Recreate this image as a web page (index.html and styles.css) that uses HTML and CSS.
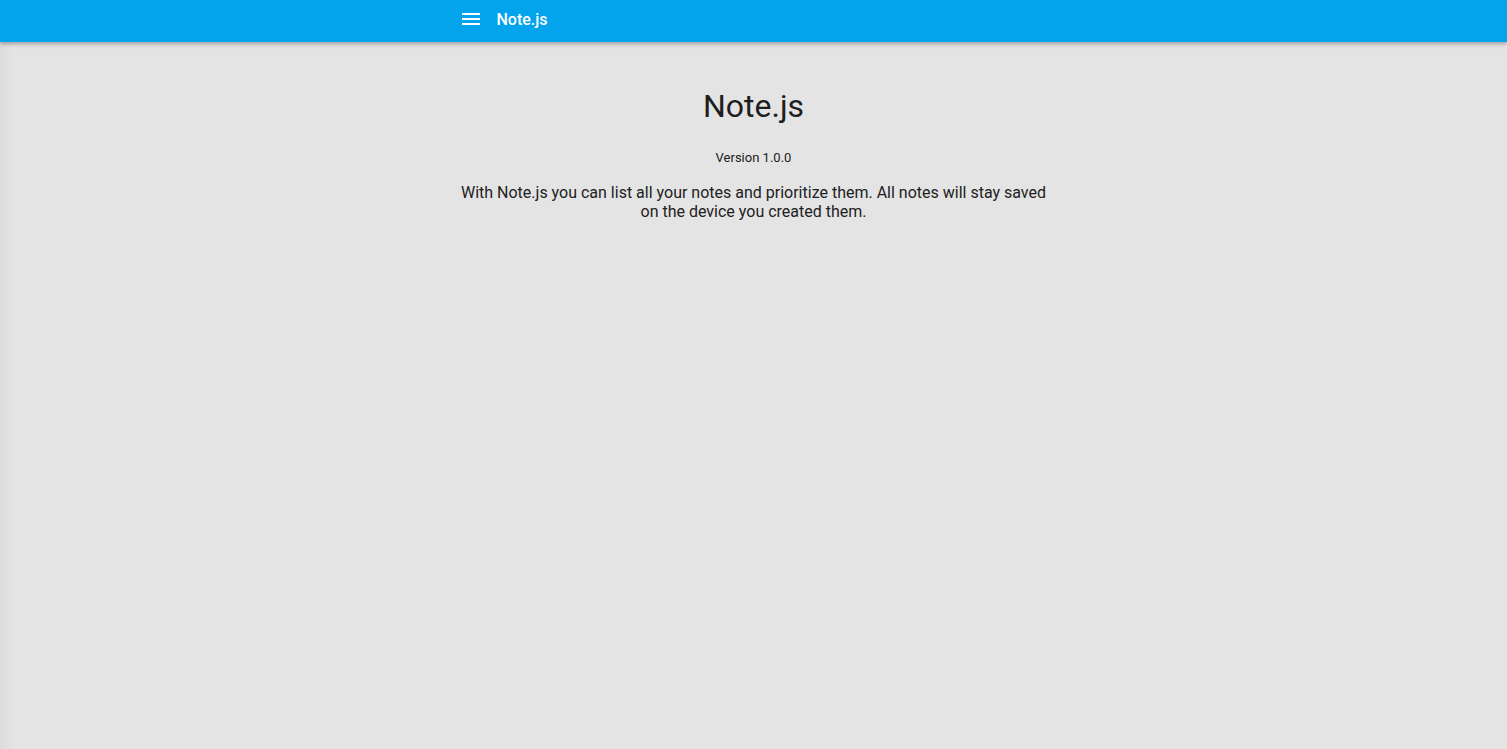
FILE: index.html
```html
<!DOCTYPE html>
<html>
<head>
<meta charset="utf-8">
<link rel="stylesheet" href="styles.css">
</head>
<body>
<header class="appbar">
  <div class="container bar-inner">
    <svg class="menu-icon" width="18" height="12" viewBox="0 0 18 12"><rect x="0" y="0" width="18" height="2" fill="#fff"/><rect x="0" y="5" width="18" height="2" fill="#fff"/><rect x="0" y="10" width="18" height="2" fill="#fff"/></svg>
    <span class="bar-title">Note.js</span>
  </div>
</header>
<main class="container content">
  <h1 class="title">Note.js</h1>
  <p class="version">Version 1.0.0</p>
  <p class="desc">With Note.js you can list all your notes and prioritize them. All notes will stay saved on the device you created them.</p>
</main>
<div class="edge"></div>
</body>
</html>
```
FILE: styles.css
```css
html, body { margin: 0; height: 100%; }
body {
  background: #e4e4e4;
  font-family: Roboto, "Noto Sans", sans-serif;
  color: #212121;
  position: relative;
  overflow: hidden;
}
.edge {
  position: absolute;
  left: 0; top: 42px; bottom: 0;
  width: 14px;
  background: linear-gradient(to right, rgba(0,0,0,0.035), rgba(0,0,0,0));
  pointer-events: none;
}
.container {
  max-width: 600px;
  margin: 0 auto;
  padding: 0 8px;
  box-sizing: border-box;
}
.appbar {
  height: 42px;
  background: #03a4ec;
  box-shadow: 0 2px 4px rgba(0,0,0,0.3);
  position: relative;
  z-index: 2;
}
.bar-inner {
  height: 42px;
  display: flex;
  align-items: center;
}
.menu-icon { margin-left: 0; margin-top: -4px; }
.bar-title {
  color: #fff;
  font-size: 16px;
  font-weight: 500;
  margin-left: 17px;
  margin-top: -4px;
}
.content { text-align: center; padding-top: 44px; }
.title {
  margin: 0;
  font-size: 32px;
  font-weight: 400;
  line-height: 40px;
  color: #1e1e1e;
}
.version {
  margin: 24px 0 0;
  font-size: 13px;
  line-height: 16px;
}
.desc {
  margin: 17px -6px 0;
  font-size: 16px;
  line-height: normal;
}
```
